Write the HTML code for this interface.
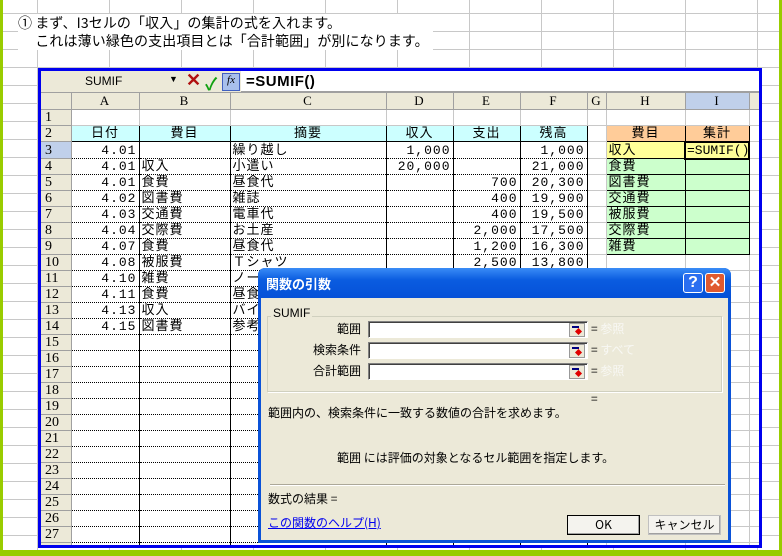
<!DOCTYPE html>
<html><head><meta charset="utf-8"><style>
*{margin:0;padding:0;box-sizing:border-box}
body{width:782px;height:556px;overflow:hidden;background:#fff;position:relative;font-family:"Liberation Sans","Noto Sans CJK JP",sans-serif;font-size:13px;color:#000}
.bg{position:absolute;left:0;top:0;width:782px;height:556px;
background-image:linear-gradient(to right,#c8c8c8 1px,transparent 1px),linear-gradient(to bottom,#c8c8c8 1px,transparent 1px);
background-size:72px 18px;background-position:37px 13px}
.gl{position:absolute;left:0;top:0;width:3px;height:556px;background:#99cc00}
.gr{position:absolute;right:0;top:0;width:3px;height:556px;background:#99cc00}
.gb{position:absolute;left:0;top:550px;width:782px;height:6px;background:#99cc00}
.intro{position:absolute;left:18px;top:14px;font-size:14px;line-height:18px;background:#fff;font-family:"Noto Sans CJK JP",sans-serif;letter-spacing:0.1px;padding-right:4px}
.frame{position:absolute;left:38px;top:68px;width:724px;height:480px;border:3px solid #0000ee;background:#fff;overflow:hidden}
.fbar{position:absolute;left:0;top:0;width:718px;height:22px;background:#fff;border-bottom:2px solid #a0a0a0}
.fleft{position:absolute;left:0;top:0;width:200px;height:21px;background:#ece9d8}
.sheet{position:absolute;left:0;top:22px}
table{border-collapse:collapse;table-layout:fixed;width:728px;font-family:"Liberation Mono","Noto Sans CJK JP",monospace;font-size:13px}
td{height:16px;border-right:1px solid #c8c8c8;border-bottom:1px solid #c8c8c8;padding:0 2px;white-space:nowrap;overflow:hidden;line-height:15px;letter-spacing:1px}
tr.h td{background:#ece9d8;text-align:center;border-color:#a0a0a0;font-family:"Liberation Serif",serif}
td.r{background:#ece9d8;text-align:left;border-color:#a0a0a0;padding-left:4px;font-family:"Liberation Serif",serif;font-size:14px;letter-spacing:0}
td.d{border-left:1px solid #000;border-right:1px solid #000;border-bottom:1px dotted #000}
td.n{text-align:right;letter-spacing:1px}
td.c{background:#ccffff;border:1px solid #000;text-align:center}
td.o{background:#ffcc99;border:1px solid #000;text-align:center}
td.y{background:#ffff99;border:1px solid #000}
td.g{background:#ccffcc;border:1px solid #000}
.dlg{position:absolute;left:258px;top:268px;width:473px;height:275px;background:#0a52d8;border-radius:7px 7px 0 0;font-family:"Noto Sans CJK JP",sans-serif;font-size:12px}
.tb{position:absolute;left:0;top:0;width:473px;height:30px;background:linear-gradient(#3a8cf6,#0a5ce0 40%,#0551d8);border-radius:7px 7px 0 0}
.body{position:absolute;left:3px;top:30px;width:467px;height:242px;background:#ece9d8}
.abs{position:absolute;white-space:nowrap}
.inp{position:absolute;left:107px;width:220px;height:17px;background:#fff;border:1px solid;border-color:#808080 #fff #fff #808080;box-shadow:inset 1px 1px 0 #404040}
.ico{position:absolute;right:2px;top:1px;width:16px;height:14px;background:#ece9d8;border:1px solid #999;overflow:hidden}
.ico:before{content:"";position:absolute;left:2px;top:2px;width:7px;height:2px;background:#000080}
.ico:after{content:"";position:absolute;left:6px;top:5px;width:5px;height:5px;background:#e00000;transform:rotate(45deg)}
.btn{position:absolute;width:73px;height:20px;background:#f4f3ee;border:1px solid #000;text-align:center;line-height:18px;box-shadow:inset -1px -1px 0 #a0a0a0}
.gray{color:#f8f8f4}
</style></head><body>
<div class="bg"></div>
<div class="intro">① まず、I3セルの「収入」の集計の式を入れます。<br>　 これは薄い緑色の支出項目とは「合計範囲」が別になります。</div>
<div class="gl"></div><div class="gr"></div><div class="gb"></div>
<div class="frame">
 <div class="fbar">
  <div class="fleft"></div>
  <div class="abs" style="left:44px;top:3px;font-size:12px;font-family:'Liberation Sans'">SUMIF</div>
  <div class="abs" style="left:128px;top:3px;font-size:9px">▼</div>
  <div class="abs" style="left:145px;top:-1px;font-size:18px;color:#b01010;font-weight:bold">✕</div>
  <div class="abs" style="left:164px;top:-1px;font-size:17px;color:#10a010;font-weight:bold">✓</div>
  <div class="abs" style="left:181px;top:2px;width:18px;height:18px;background:#a8c0ec;border:1px solid #4060c0;font-size:11px;font-style:italic;text-align:center;font-family:'Liberation Serif'">fx</div>
  <div class="abs" style="left:205px;top:2px;font-size:15px;font-family:'Liberation Sans';font-weight:bold;letter-spacing:0.5px">=SUMIF()</div>
 </div>
 <div class="sheet"><table>
 <colgroup><col style="width:30px"><col style="width:68px"><col style="width:91px"><col style="width:156px"><col style="width:67px"><col style="width:67px"><col style="width:67px"><col style="width:19px"><col style="width:79px"><col style="width:64px"><col style="width:20px"></colgroup>
 <tr class="h"><td></td><td>A</td><td>B</td><td>C</td><td>D</td><td>E</td><td>F</td><td>G</td><td>H</td><td style="background:#c0d0ea">I</td><td></td></tr>
 <tr><td class="r">1</td><td></td><td></td><td></td><td></td><td></td><td></td><td></td><td></td><td></td><td></td></tr>
 <tr><td class="r">2</td><td class="c">日付</td><td class="c">費目</td><td class="c">摘要</td><td class="c">収入</td><td class="c">支出</td><td class="c">残高</td><td></td><td class="o">費目</td><td class="o">集計</td><td></td></tr>
 <tr><td class="r" style="background:#c0d0ea">3</td><td class="d n">4.01</td><td class="d"></td><td class="d">繰り越し</td><td class="d n">1,000</td><td class="d"></td><td class="d n">1,000</td><td></td><td class="y">収入</td><td class="y" style="border:2px solid #000;letter-spacing:0;padding:0 1px">=SUMIF()</td><td></td></tr>
 <tr><td class="r">4</td><td class="d n">4.01</td><td class="d">収入</td><td class="d">小遣い</td><td class="d n">20,000</td><td class="d"></td><td class="d n">21,000</td><td></td><td class="g">食費</td><td class="g"></td><td></td></tr>
 <tr><td class="r">5</td><td class="d n">4.01</td><td class="d">食費</td><td class="d">昼食代</td><td class="d"></td><td class="d n">700</td><td class="d n">20,300</td><td></td><td class="g">図書費</td><td class="g"></td><td></td></tr>
 <tr><td class="r">6</td><td class="d n">4.02</td><td class="d">図書費</td><td class="d">雑誌</td><td class="d"></td><td class="d n">400</td><td class="d n">19,900</td><td></td><td class="g">交通費</td><td class="g"></td><td></td></tr>
 <tr><td class="r">7</td><td class="d n">4.03</td><td class="d">交通費</td><td class="d">電車代</td><td class="d"></td><td class="d n">400</td><td class="d n">19,500</td><td></td><td class="g">被服費</td><td class="g"></td><td></td></tr>
 <tr><td class="r">8</td><td class="d n">4.04</td><td class="d">交際費</td><td class="d">お土産</td><td class="d"></td><td class="d n">2,000</td><td class="d n">17,500</td><td></td><td class="g">交際費</td><td class="g"></td><td></td></tr>
 <tr><td class="r">9</td><td class="d n">4.07</td><td class="d">食費</td><td class="d">昼食代</td><td class="d"></td><td class="d n">1,200</td><td class="d n">16,300</td><td></td><td class="g">雑費</td><td class="g"></td><td></td></tr>
 <tr><td class="r">10</td><td class="d n">4.08</td><td class="d">被服費</td><td class="d">Ｔシャツ</td><td class="d"></td><td class="d n">2,500</td><td class="d n">13,800</td><td></td><td></td><td></td><td></td></tr>
 <tr><td class="r">11</td><td class="d n">4.10</td><td class="d">雑費</td><td class="d">ノート</td><td class="d"></td><td class="d"></td><td class="d"></td><td></td><td></td><td></td><td></td></tr>
 <tr><td class="r">12</td><td class="d n">4.11</td><td class="d">食費</td><td class="d">昼食代</td><td class="d"></td><td class="d"></td><td class="d"></td><td></td><td></td><td></td><td></td></tr>
 <tr><td class="r">13</td><td class="d n">4.13</td><td class="d">収入</td><td class="d">バイト代</td><td class="d"></td><td class="d"></td><td class="d"></td><td></td><td></td><td></td><td></td></tr>
 <tr><td class="r">14</td><td class="d n">4.15</td><td class="d">図書費</td><td class="d">参考書</td><td class="d"></td><td class="d"></td><td class="d"></td><td></td><td></td><td></td><td></td></tr>
 <tr><td class="r">15</td><td class="d"></td><td class="d"></td><td class="d"></td><td class="d"></td><td class="d"></td><td class="d"></td><td></td><td></td><td></td><td></td></tr>
 <tr><td class="r">16</td><td class="d"></td><td class="d"></td><td class="d"></td><td class="d"></td><td class="d"></td><td class="d"></td><td></td><td></td><td></td><td></td></tr>
 <tr><td class="r">17</td><td class="d"></td><td class="d"></td><td class="d"></td><td class="d"></td><td class="d"></td><td class="d"></td><td></td><td></td><td></td><td></td></tr>
 <tr><td class="r">18</td><td class="d"></td><td class="d"></td><td class="d"></td><td class="d"></td><td class="d"></td><td class="d"></td><td></td><td></td><td></td><td></td></tr>
 <tr><td class="r">19</td><td class="d"></td><td class="d"></td><td class="d"></td><td class="d"></td><td class="d"></td><td class="d"></td><td></td><td></td><td></td><td></td></tr>
 <tr><td class="r">20</td><td class="d"></td><td class="d"></td><td class="d"></td><td class="d"></td><td class="d"></td><td class="d"></td><td></td><td></td><td></td><td></td></tr>
 <tr><td class="r">21</td><td class="d"></td><td class="d"></td><td class="d"></td><td class="d"></td><td class="d"></td><td class="d"></td><td></td><td></td><td></td><td></td></tr>
 <tr><td class="r">22</td><td class="d"></td><td class="d"></td><td class="d"></td><td class="d"></td><td class="d"></td><td class="d"></td><td></td><td></td><td></td><td></td></tr>
 <tr><td class="r">23</td><td class="d"></td><td class="d"></td><td class="d"></td><td class="d"></td><td class="d"></td><td class="d"></td><td></td><td></td><td></td><td></td></tr>
 <tr><td class="r">24</td><td class="d"></td><td class="d"></td><td class="d"></td><td class="d"></td><td class="d"></td><td class="d"></td><td></td><td></td><td></td><td></td></tr>
 <tr><td class="r">25</td><td class="d"></td><td class="d"></td><td class="d"></td><td class="d"></td><td class="d"></td><td class="d"></td><td></td><td></td><td></td><td></td></tr>
 <tr><td class="r">26</td><td class="d"></td><td class="d"></td><td class="d"></td><td class="d"></td><td class="d"></td><td class="d"></td><td></td><td></td><td></td><td></td></tr>
 <tr><td class="r">27</td><td class="d"></td><td class="d"></td><td class="d"></td><td class="d"></td><td class="d"></td><td class="d"></td><td></td><td></td><td></td><td></td></tr>
 <tr><td class="r">28</td><td class="d"></td><td class="d"></td><td class="d"></td><td class="d"></td><td class="d"></td><td class="d"></td><td></td><td></td><td></td><td></td></tr>
 </table></div>
</div>
<div class="dlg">
 <div class="tb">
  <div class="abs" style="left:8px;top:6px;color:#fff;font-weight:bold;font-size:13px">関数の引数</div>
  <div class="abs" style="left:425px;top:5px;width:20px;height:20px;background:#2a6ef0;border:1px solid #fff;border-radius:3px;color:#fff;font-weight:bold;font-size:16px;text-align:center;line-height:18px;font-family:'Liberation Sans'">?</div>
  <div class="abs" style="left:447px;top:5px;width:20px;height:20px;background:#e05a30;border:1px solid #fff;border-radius:3px;color:#fff;font-weight:bold;font-size:15px;text-align:center;line-height:18px;font-family:'Liberation Sans'">✕</div>
 </div>
 <div class="body">
  <div class="abs" style="left:6px;top:18px;width:455px;height:76px;border:1px solid #d0d0bf;box-shadow:1px 1px 0 #fff"></div>
  <div class="abs" style="left:10px;top:8px;background:#ece9d8;padding:0 2px;font-family:'Liberation Sans';font-size:12px">SUMIF</div>
  <div class="abs" style="left:0;width:100px;text-align:right;top:22px">範囲</div>
  <div class="abs" style="left:0;width:100px;text-align:right;top:43px">検索条件</div>
  <div class="abs" style="left:0;width:100px;text-align:right;top:64px">合計範囲</div>
  <div class="inp" style="top:23px"><div class="ico"></div></div>
  <div class="inp" style="top:44px"><div class="ico"></div></div>
  <div class="inp" style="top:65px"><div class="ico"></div></div>
  <div class="abs" style="left:330px;top:22px">= <span class="gray">参照</span></div>
  <div class="abs" style="left:330px;top:43px">= <span class="gray">すべて</span></div>
  <div class="abs" style="left:330px;top:64px">= <span class="gray">参照</span></div>
  <div class="abs" style="left:330px;top:92px">=</div>
  <div class="abs" style="left:7px;top:106px">範囲内の、検索条件に一致する数値の合計を求めます。</div>
  <div class="abs" style="left:76px;top:151px">範囲 には評価の対象となるセル範囲を指定します。</div>
  <div class="abs" style="left:9px;top:186px;width:455px;height:2px;border-top:1px solid #aca899;border-bottom:1px solid #fff"></div>
  <div class="abs" style="left:7px;top:192px">数式の結果 =</div>
  <div class="abs" style="left:7px;top:216px;color:#0000ee;text-decoration:underline">この関数のヘルプ(H)</div>
  <div class="btn" style="left:306px;top:217px">OK</div>
  <div class="btn" style="left:387px;top:217px;border-color:#c0c0c0">キャンセル</div>
 </div>
</div>
</body></html>
